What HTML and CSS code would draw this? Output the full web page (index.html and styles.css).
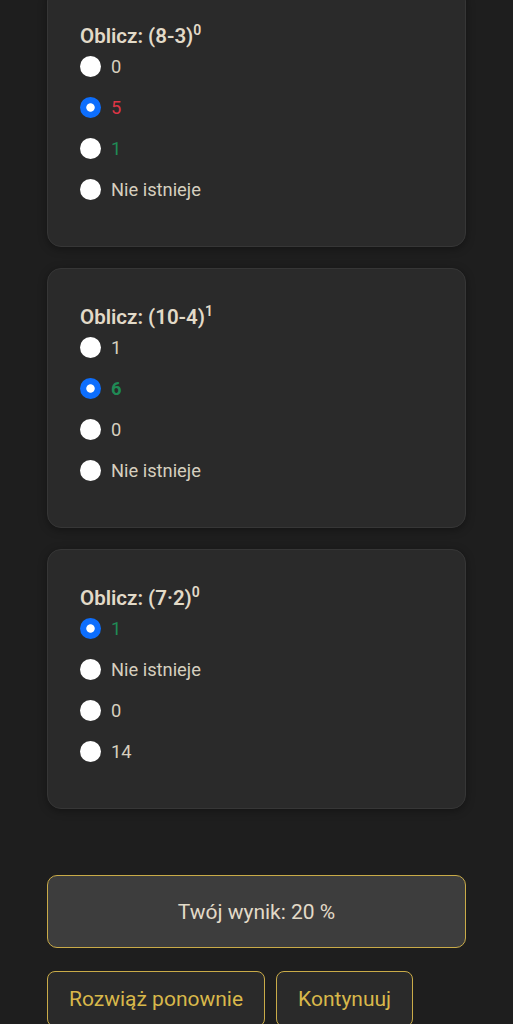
FILE: index.html
```html
<!DOCTYPE html>
<html lang="pl">
<head>
<meta charset="utf-8">
<title>Quiz</title>
<link rel="stylesheet" href="styles.css">
</head>
<body>
<main class="quiz">
  <section class="card">
    <h3 class="q">Oblicz: (8-3)<sup>0</sup></h3>
    <label class="opt"><input type="radio" name="q1"><span>0</span></label>
    <label class="opt"><input type="radio" name="q1" checked><span class="wrong">5</span></label>
    <label class="opt"><input type="radio" name="q1"><span class="right">1</span></label>
    <label class="opt"><input type="radio" name="q1"><span>Nie istnieje</span></label>
  </section>
  <section class="card">
    <h3 class="q">Oblicz: (10-4)<sup>1</sup></h3>
    <label class="opt"><input type="radio" name="q2"><span>1</span></label>
    <label class="opt"><input type="radio" name="q2" checked><span class="right bold">6</span></label>
    <label class="opt"><input type="radio" name="q2"><span>0</span></label>
    <label class="opt"><input type="radio" name="q2"><span>Nie istnieje</span></label>
  </section>
  <section class="card">
    <h3 class="q">Oblicz: (7·2)<sup>0</sup></h3>
    <label class="opt"><input type="radio" name="q3" checked><span class="right">1</span></label>
    <label class="opt"><input type="radio" name="q3"><span>Nie istnieje</span></label>
    <label class="opt"><input type="radio" name="q3"><span>0</span></label>
    <label class="opt"><input type="radio" name="q3"><span>14</span></label>
  </section>
  <div class="score">Twój wynik: 20 %</div>
  <div class="actions">
    <button class="btn">Rozwiąż ponownie</button>
    <button class="btn">Kontynuuj</button>
  </div>
</main>
</body>
</html>
```
FILE: styles.css
```css
html, body {
  margin: 0;
  padding: 0;
  background: #1e1e1e;
  font-family: Roboto, "Liberation Sans", sans-serif;
  color: #ddd6c6;
}
.quiz {
  width: 419px;
  margin: -13px auto 0;
  display: flex;
  flex-direction: column;
}
.card {
  box-sizing: border-box;
  height: 260px;
  background: #2a2a2a;
  border: 1px solid #363636;
  border-radius: 14px;
  box-shadow: 0 2px 8px rgba(0,0,0,0.35);
  padding: 38px 32px 0;
  margin-bottom: 21px;
}
.q {
  margin: 0;
  font-size: 20.5px;
  line-height: 20px;
  font-weight: 600;
  color: #e2dac8;
}
.q sup {
  font-size: 14px;
  line-height: 0;
  vertical-align: 8px;
}
.opt {
  display: flex;
  align-items: center;
  height: 41px;
  font-size: 18.3px;
  color: #d6cfbf;
}
.opt input {
  appearance: none;
  -webkit-appearance: none;
  width: 21px;
  height: 21px;
  margin: 0 10px 0 0;
  border-radius: 50%;
  background: #fff;
  flex: none;
}
.opt input:checked {
  background: radial-gradient(circle, #fff 0 3.8px, #0d6efd 4.6px);
}
.wrong { color: #dc3545; }
.right { color: #1f8a55; }
.bold { font-weight: 700; }
.score {
  margin-top: 45px;
  height: 73px;
  box-sizing: border-box;
  display: flex;
  align-items: center;
  justify-content: center;
  background: #3d3d3d;
  border: 1px solid #c9ab48;
  border-radius: 10px;
  font-size: 21px;
  color: #e2dac8;
}
.actions {
  display: flex;
  gap: 11px;
  margin-top: 23px;
}
.btn {
  height: 56px;
  padding: 0 21px;
  background: #2a2a2a;
  border: 1px solid #c9ab48;
  border-radius: 8px;
  color: #d8b84a;
  font-family: Roboto, "Liberation Sans", sans-serif;
  font-size: 21px;
}
```
